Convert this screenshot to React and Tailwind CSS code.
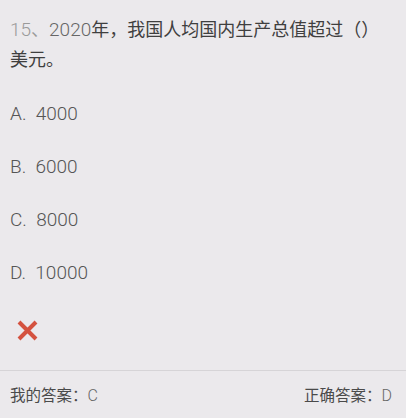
import React from "react";

function Lat({ children, className = "" }) {
  return (
    <span className={"font-[Roboto,sans-serif] font-light " + className}>
      {children}
    </span>
  );
}

function Option({ letter, value }) {
  return (
    <div className="h-[53px] flex items-center px-[10px] text-[19px] text-[#555]">
      <Lat>
        {letter}.&nbsp;&nbsp;{value}
      </Lat>
    </div>
  );
}

export default function App() {
  const options = [
    ["A", "4000"],
    ["B", "6000"],
    ["C", "8000"],
    ["D", "10000"],
  ];

  return (
    <div className="w-[406px] h-[418px] bg-[#ebe9ec] overflow-hidden font-['Noto_Sans_CJK_SC',sans-serif]">
      <div className="pt-[14px] px-[10px] text-[18px] leading-[28px] text-[#3f3f3f]">
        <Lat className="text-[#9a9a9a] text-[19px]">15</Lat>
        <span className="text-[#9a9a9a]">、</span>
        <Lat className="text-[#666] text-[19px]">2020</Lat>
        年，我国人均国内生产总值超过（）美元。
      </div>

      <div className="mt-[16px]">
        {options.map(([l, v]) => (
          <Option key={l} letter={l} value={v} />
        ))}
      </div>

      <div className="h-[60px] flex items-center pl-[17px]">
        <svg width="21" height="21" viewBox="0 0 21 21">
          <path
            d="M2 2 L19 19 M19 2 L2 19"
            stroke="#d4523f"
            strokeWidth="4"
          />
        </svg>
      </div>

      <div className="mt-[10px] border-t border-b border-[#d6d4d7] h-[50px] flex items-center justify-between pl-[10px] pr-[14px] text-[15.5px] text-[#4a4a4a]">
        <div>
          我的答案：<Lat className="text-[#666] text-[16px]">C</Lat>
        </div>
        <div>
          正确答案：<Lat className="text-[#666] text-[16px]">D</Lat>
        </div>
      </div>
    </div>
  );
}
